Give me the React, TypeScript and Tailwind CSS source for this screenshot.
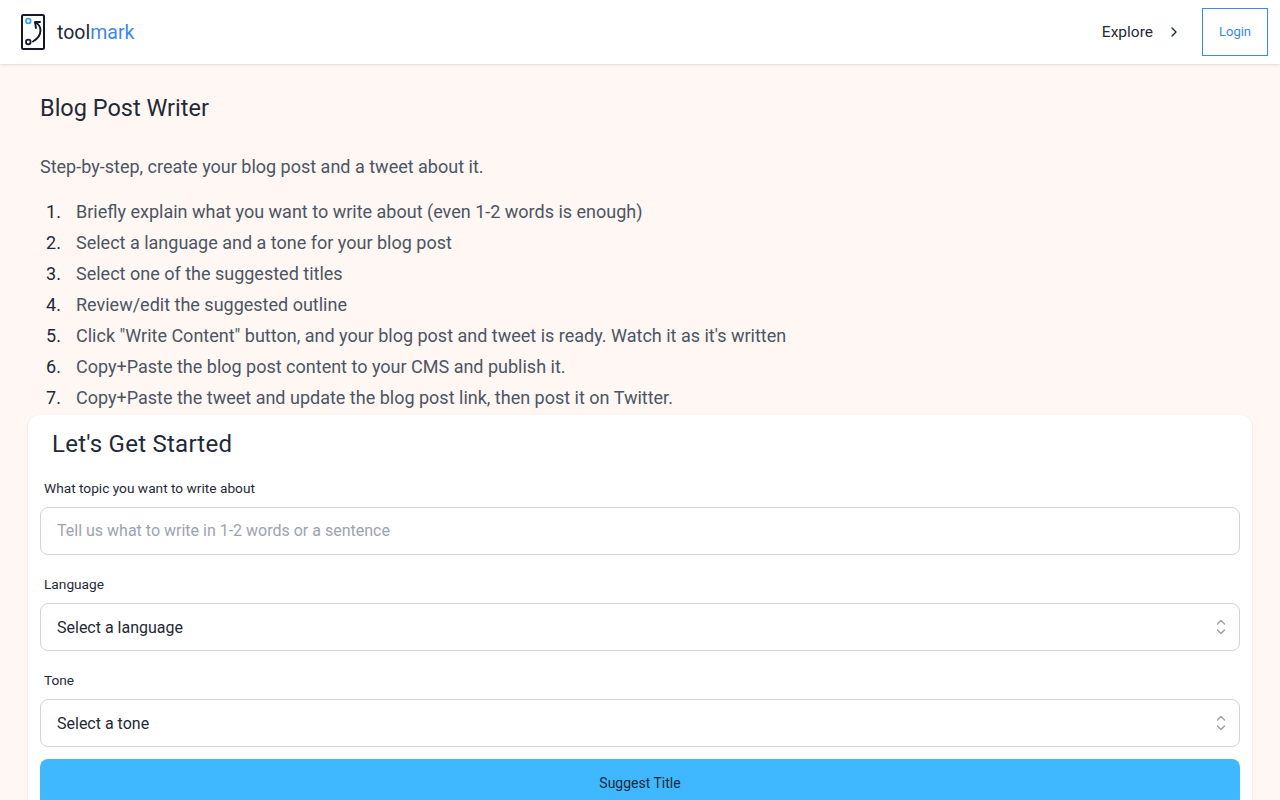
import { ChevronRight } from "lucide-react";

const STEPS = [
  "Briefly explain what you want to write about (even 1-2 words is enough)",
  "Select a language and a tone for your blog post",
  "Select one of the suggested titles",
  "Review/edit the suggested outline",
  'Click "Write Content" button, and your blog post and tweet is ready. Watch it as it\'s written',
  "Copy+Paste the blog post content to your CMS and publish it.",
  "Copy+Paste the tweet and update the blog post link, then post it on Twitter.",
];

function Logo() {
  return (
    <svg width="26" height="38" viewBox="0 0 26 38" fill="none" className="shrink-0">
      <rect x="2" y="2" width="22" height="34" rx="1.5" stroke="#111827" strokeWidth="2" />
      <circle cx="8.3" cy="8" r="2.3" stroke="#38a3f1" strokeWidth="1.8" />
      <circle cx="8.3" cy="29" r="2.3" stroke="#111827" strokeWidth="1.8" />
      <path d="M15.5 9.5C21 12 24 22 13 28.5" stroke="#111827" strokeWidth="1.9" strokeLinecap="round" />
      <path d="M20 9h-5l1 6" stroke="#111827" strokeWidth="1.9" strokeLinecap="round" strokeLinejoin="round" />
    </svg>
  );
}

function UpDown() {
  return (
    <svg width="12" height="18" viewBox="0 0 12 18" fill="none" className="text-[#9ca3af]">
      <path d="M2.5 6L6 2.5 9.5 6M2.5 12L6 15.5 9.5 12" stroke="currentColor" strokeWidth="1.5" strokeLinecap="round" strokeLinejoin="round" />
    </svg>
  );
}

function SelectField({ label, placeholder }: { label: string; placeholder: string }) {
  return (
    <div className="mb-3 px-3">
      <label className="block h-9 pt-[7px] px-1 text-[13.7px] leading-5 text-[#1f2937]">{label}</label>
      <div className="flex h-12 items-center justify-between rounded-lg border border-[#d1d5db] bg-white pl-4 pr-[12px]">
        <span className="pt-px text-base text-[#1f2937]">{placeholder}</span>
        <UpDown />
      </div>
    </div>
  );
}

export default function App() {
  return (
    <div className="min-h-screen bg-[#fff7f4] font-['Roboto',sans-serif]">
      {/* Header */}
      <header className="flex h-16 items-center justify-between bg-white pl-5 pr-3 shadow-sm">
        <a className="flex items-center gap-[11px]">
          <Logo />
          <span className="pt-px text-[19.5px] text-[#1f2937]">
            tool<span className="text-[#3b88eb]">mark</span>
          </span>
        </a>
        <div className="flex items-center">
          <span className="pt-px text-[15.5px] text-[#1f2937]">Explore</span>
          <ChevronRight size={16} strokeWidth={2} className="ml-[13px] mr-[20px] text-[#1f2937]" />
          <button className="h-12 w-[66px] border border-[#3b88eb] text-[13px] text-[#3b88eb]">Login</button>
        </div>
      </header>

      {/* Intro */}
      <main>
        <div className="px-10 pt-7">
          <h1 className="text-[23.5px] leading-8 text-[#1f2937]">Blog Post Writer</h1>
          <p className="mt-[29px] text-lg leading-7 text-[#4b5563]">
            Step-by-step, create your blog post and a tweet about it.
          </p>
          <ol className="mt-[15px] text-lg leading-[31px] text-[#4b5563]">
            {STEPS.map((step, i) => (
              <li key={i} className="flex">
                <span className="w-9 pl-[6px] text-[#1f2937]">{i + 1}.</span>
                <span>{step}</span>
              </li>
            ))}
          </ol>
        </div>

        {/* Form card */}
        <section className="mx-7 mt-[2px] rounded-xl bg-white pt-[13px] shadow-sm">
          <h2 className="px-6 text-2xl leading-8 tracking-[0.25px] text-[#1f2937]">Let's Get Started</h2>
          <div className="mt-[11px] mb-3 px-3">
            <label className="block h-9 pt-[7px] px-1 text-[13.7px] leading-5 text-[#1f2937]">
              What topic you want to write about
            </label>
            <input
              placeholder="Tell us what to write in 1-2 words or a sentence"
              className="h-12 w-full rounded-lg border border-[#d1d5db] bg-white px-4 pb-[2px] text-base outline-none placeholder:text-[#9ca3af]"
            />
          </div>
          <SelectField label="Language" placeholder="Select a language" />
          <SelectField label="Tone" placeholder="Select a tone" />
          <div className="px-3 pb-4">
            <button className="h-12 w-full rounded-lg bg-[#3fb8ff] text-sm text-[#1f2937]">Suggest Title</button>
          </div>
        </section>
      </main>
    </div>
  );
}
